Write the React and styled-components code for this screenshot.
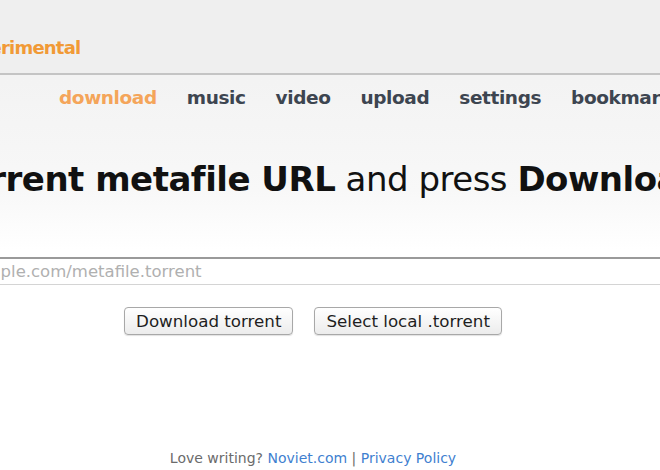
import styled, { createGlobalStyle } from "styled-components";

const GlobalStyle = createGlobalStyle`
  html, body {
    margin: 0;
    padding: 0;
    background: #ffffff;
    overflow: hidden;
  }
  body {
    font-family: "DejaVu Sans", "Liberation Sans", sans-serif;
  }
`;

const Viewport = styled.div`
  width: 660px;
  height: 470px;
  overflow: hidden;
  background: linear-gradient(#f3f3f3 0px, #f3f3f3 80px, #f8f8f8 190px, #ffffff 250px);
`;

// wide page, shifted left so its centre sits at x=313 of the window
const Stage = styled.div`
  width: 1000px;
  margin-left: -187px;
  display: flex;
  flex-direction: column;
`;

const Header = styled.header`
  height: 75px;
  background: #efefef;
  border-bottom: 2px solid #c4c4c4;
  display: flex;
  align-items: flex-end;
  padding-left: 87px;
  box-sizing: border-box;
`;

const Logo = styled.div`
  font-size: 18px;
  font-weight: bold;
  color: #f19a36;
  letter-spacing: -0.8px;
  padding-bottom: 15px;
`;

const Nav = styled.nav`
  display: flex;
  gap: 30px;
  padding: 12px 0 0 246px;
  height: 40px;
  box-sizing: border-box;
`;

const NavItem = styled.a`
  font-size: 18.5px;
  font-weight: bold;
  color: ${(p) => (p.$active ? "#f4a55a" : "#3d4550")};
  text-decoration: none;
  letter-spacing: -0.4px;
`;

const Heading = styled.h1`
  margin: 44px 0 0 -26px;
  font-size: 34px;
  font-weight: normal;
  color: #111;
  white-space: nowrap;
  letter-spacing: -0.5px;
  b {
    font-weight: bold;
  }
`;

const UrlInput = styled.input`
  margin: 58px 0 0 0;
  width: 1000px;
  height: 28px;
  box-sizing: border-box;
  border: none;
  border-top: 2px solid #9a9a9a;
  border-bottom: 1px solid #d4d4d4;
  background: #fff;
  padding: 0 0 0 47px;
  font-family: "DejaVu Sans", sans-serif;
  font-size: 16.5px;
  color: #333;
  outline: none;
  &::placeholder {
    color: #b0b0b0;
  }
`;

const Buttons = styled.div`
  display: flex;
  justify-content: center;
  gap: 21px;
  margin-top: 22px;
`;

const Button = styled.button`
  height: 28px;
  padding: 0 11px;
  border: 1px solid #a8a8a8;
  border-radius: 4px;
  background: linear-gradient(#ffffff, #ececec);
  box-shadow: 0 1px 1px rgba(0, 0, 0, 0.12);
  font-family: "DejaVu Sans", sans-serif;
  font-size: 16.7px;
  color: #1e1e1e;
`;

const Footer = styled.footer`
  margin-top: 115px;
  text-align: center;
  font-size: 14px;
  color: #6b6b6b;
  a {
    color: #3f7fd0;
    text-decoration: none;
  }
`;

const navItems = ["download", "music", "video", "upload", "settings", "bookmarks", "help"];

export default function App() {
  return (
    <>
      <GlobalStyle />
      <Viewport>
        <Stage>
          <Header>
            <Logo>bitlet experimental</Logo>
          </Header>
          <Nav>
            {navItems.map((item, i) => (
              <NavItem key={item} href="#" $active={i === 0}>
                {item}
              </NavItem>
            ))}
          </Nav>
          <Heading>
            Enter the <b>torrent metafile URL</b> and press <b>Download</b>
          </Heading>
          <UrlInput placeholder="http://www.example.com/metafile.torrent" />
          <Buttons>
            <Button>Download torrent</Button>
            <Button>Select local .torrent</Button>
          </Buttons>
          <Footer>
            Love writing? <a href="#">Noviet.com</a> | <a href="#">Privacy Policy</a>
          </Footer>
        </Stage>
      </Viewport>
    </>
  );
}
